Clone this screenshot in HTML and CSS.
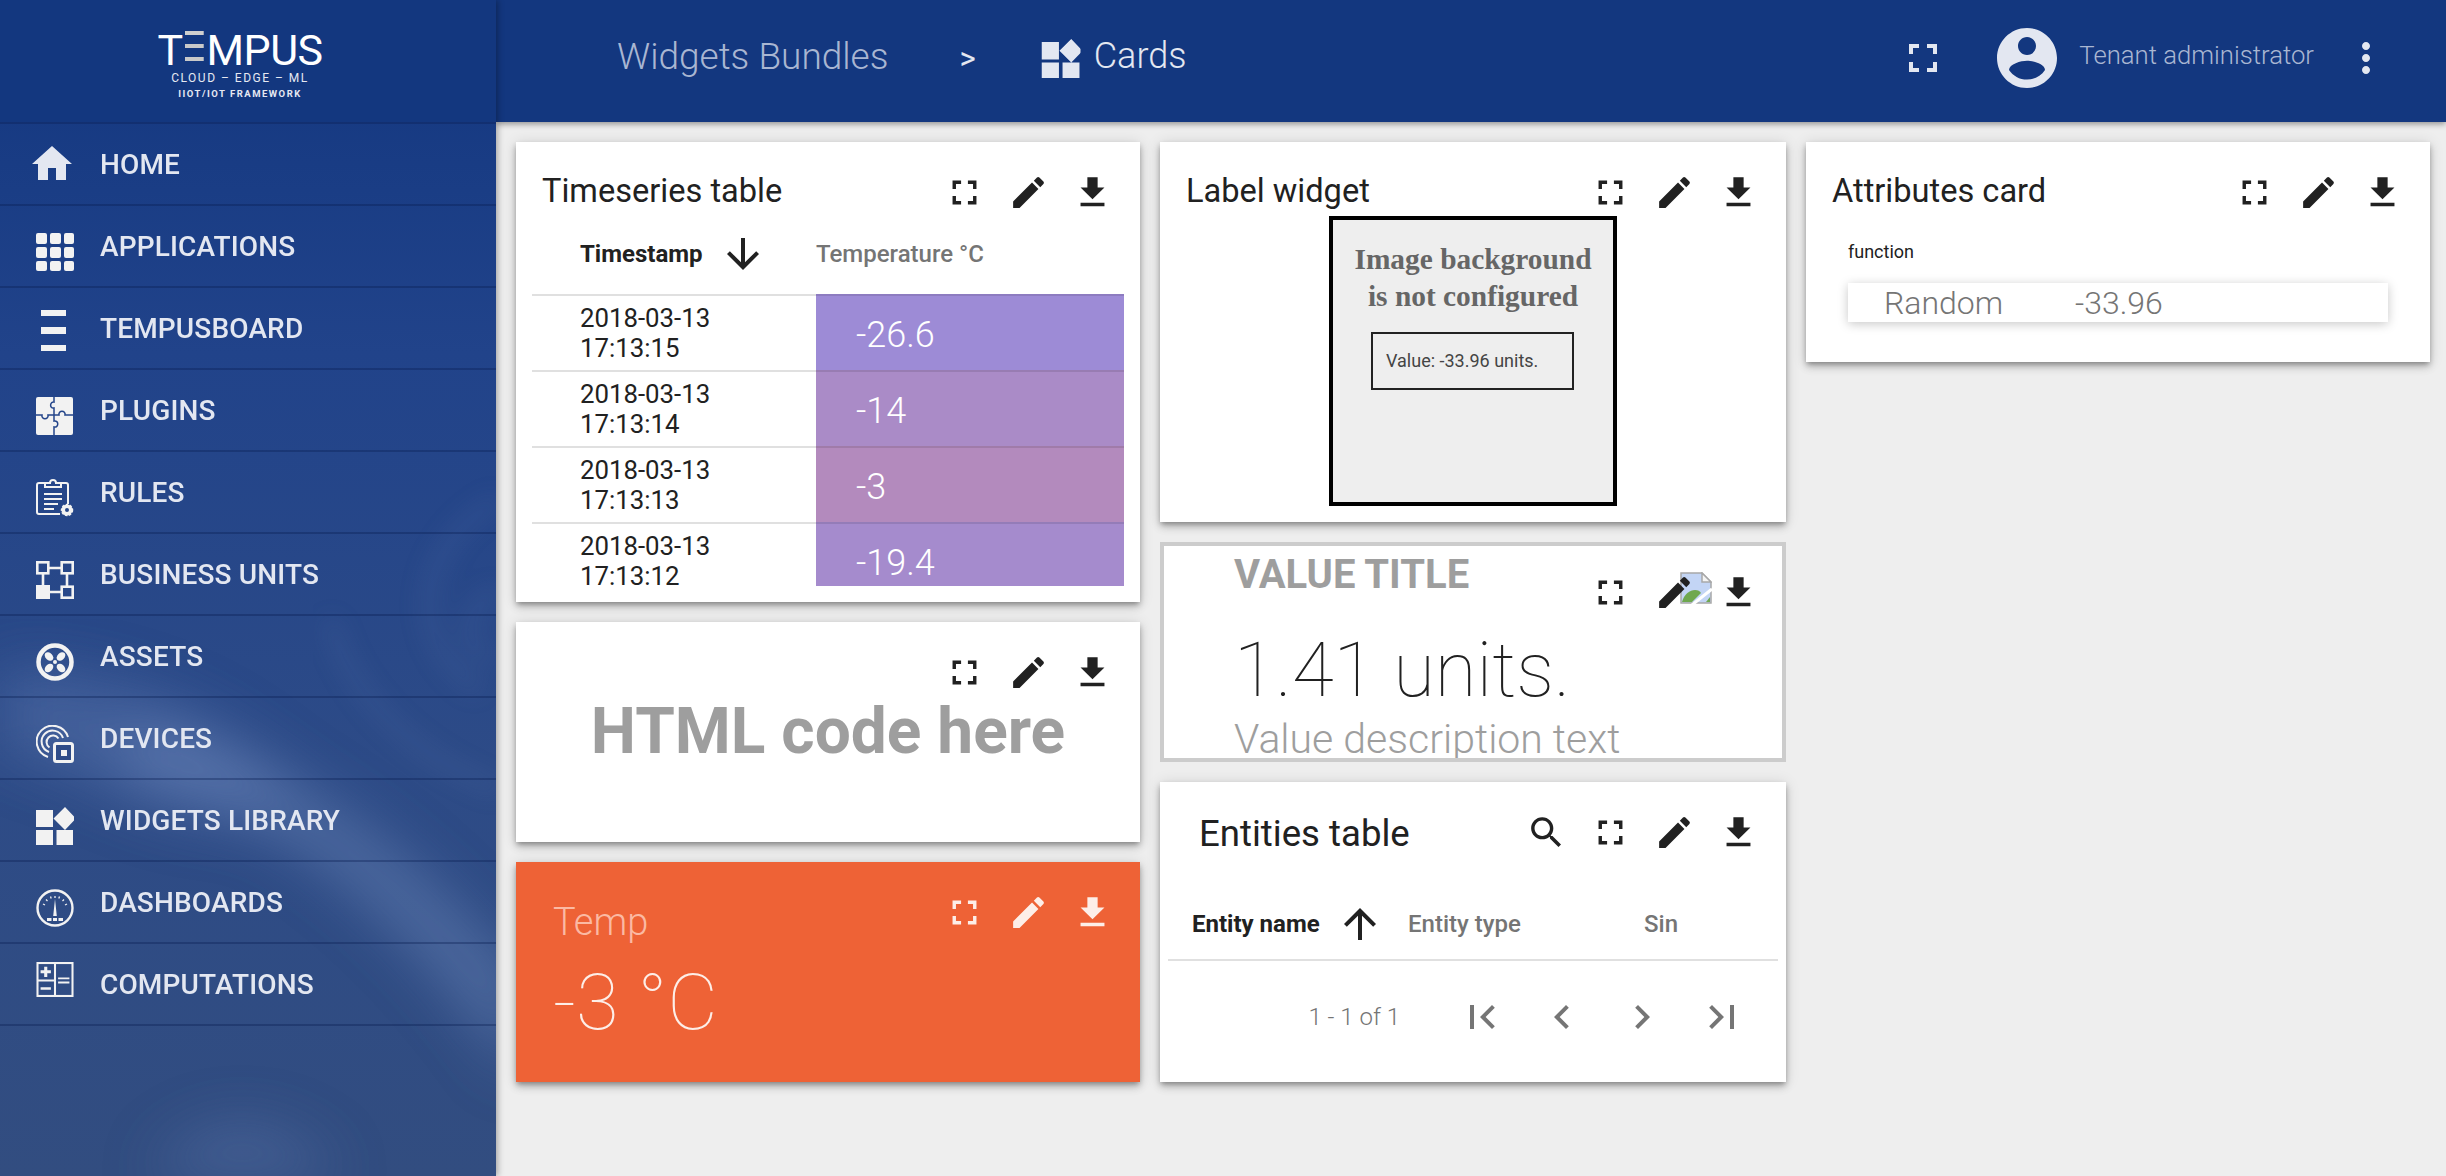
FILE: index.html
```html
<!DOCTYPE html>
<html lang="en">
<head>
    <meta charset="UTF-8">
    <title>Tempus - Cards</title>
    <link rel="stylesheet" href="styles.css">
</head>
<body>
<svg class="sprite" xmlns="http://www.w3.org/2000/svg">
    <symbol id="i_full" viewBox="0 0 24 24"><path d="M7 14H5v5h5v-2H7v-3zm-2-4h2V7h3V5H5v5zm12 7h-3v2h5v-5h-2v3zM14 5v2h3v3h2V5h-5z"/></symbol>
    <symbol id="i_edit" viewBox="0 0 24 24"><path d="M3 17.25V21h3.75L17.81 9.94l-3.75-3.75L3 17.25zM20.71 7.04c.39-.39.39-1.02 0-1.41l-2.34-2.34c-.39-.39-1.02-.39-1.41 0l-1.83 1.83 3.75 3.75 1.83-1.83z"/></symbol>
    <symbol id="i_down" viewBox="0 0 24 24"><path d="M19 9h-4V3H9v6H5l7 7 7-7zM5 18v2h14v-2H5z"/></symbol>
    <symbol id="i_search" viewBox="0 0 24 24"><path d="M15.5 14h-.79l-.28-.27C15.41 12.59 16 11.11 16 9.5 16 5.91 13.09 3 9.5 3S3 5.91 3 9.5 5.91 16 9.5 16c1.61 0 3.09-.59 4.23-1.57l.27.28v.79l5 4.99L20.49 19l-4.99-5zm-6 0C7.01 14 5 11.99 5 9.5S7.01 5 9.5 5 14 7.01 14 9.5 11.99 14 9.5 14z"/></symbol>
    <symbol id="i_widgets" viewBox="0 0 38 38"><path d="M0 3h17v17H0zM0 23h17v15H0v-15zM20.500 23H37v15H20.500zM29 0l11 11.500L29 23 17.500 11.500z"/></symbol>
</svg>

<aside class="side">
    <svg class="side_bg" viewBox="0 0 496 1176" preserveAspectRatio="none" xmlns="http://www.w3.org/2000/svg">
        <defs>
            <linearGradient id="side_base" x1="0" y1="0" x2="0" y2="1">
                <stop offset="0" stop-color="#12367f"/>
                <stop offset=".3" stop-color="#21438a"/>
                <stop offset=".65" stop-color="#2d4b87"/>
                <stop offset="1" stop-color="#324d80"/>
            </linearGradient>
            <filter id="blur_big"><feGaussianBlur stdDeviation="28"/></filter>
            <filter id="blur_small"><feGaussianBlur stdDeviation="12"/></filter>
        </defs>
        <rect width="496" height="1176" fill="url(#side_base)"/>
        <g filter="url(#blur_big)">
            <path d="M0 670 C120 670 240 720 300 800 C200 860 80 760 0 750z" fill="#5a76ad" opacity=".5"/>
            <path d="M130 780 C260 800 400 900 520 1080 L520 980 C420 860 300 760 130 720z" fill="#6a85b8" opacity=".55"/>
            <path d="M150 1176 C200 1110 280 1110 340 1176z" fill="#5f79ad" opacity=".45"/>
        </g>
        <g filter="url(#blur_small)" fill="none" stroke="#5b77ad" stroke-width="12" opacity=".25">
            <path d="M500 500 C420 540 400 640 480 690"/>
            <path d="M500 590 C460 610 460 640 490 660"/>
            <path d="M330 620 C350 700 420 760 500 790"/>
        </g>
    </svg>
    <div class="logo">
        <div class="logo_name">T<span class="logo_e">E</span>MPUS</div>
        <div class="logo_sub">CLOUD – EDGE – ML</div>
        <div class="logo_tag">IIOT/IOT FRAMEWORK</div>
    </div>
    <nav class="nav">
        <a class="nav_item">
            <svg class="nav_icon nav_icon_home" viewBox="0 0 24 24"><path d="M10 20v-6h4v6h5v-8h3L12 3 2 12h3v8z" fill="#e3e7f1"/></svg>
            HOME
        </a>
        <a class="nav_item">
            <svg class="nav_icon" viewBox="0 0 38 38"><g fill="#f2f2f2"><rect width="11" height="11" rx="2"/><rect x="14" width="11" height="11" rx="2"/><rect x="28" width="10" height="11" rx="2"/><rect y="14" width="11" height="11" rx="2"/><rect x="14" y="14" width="11" height="11" rx="2"/><rect x="28" y="14" width="10" height="11" rx="2"/><rect y="28" width="11" height="10" rx="2"/><rect x="14" y="28" width="11" height="10" rx="2"/><rect x="28" y="28" width="10" height="10" rx="2"/></g></svg>
            APPLICATIONS
        </a>
        <a class="nav_item">
            <svg class="nav_icon nav_icon_board" viewBox="0 0 38 42"><g fill="#f2f2f2"><rect x="5" width="25" height="6"/><rect x="5" y="17" width="25" height="7"/><rect x="5" y="35" width="25" height="6"/></g></svg>
            TEMPUSBOARD
        </a>
        <a class="nav_item">
            <svg class="nav_icon" viewBox="0 0 38 38"><rect width="37" height="38" rx="2" fill="#f2f2f2"/><path d="M18 0v5c-4-1-5 7 0 6v7M0 18h6c-1 5 7 5 6 0h6M18 18h5c-1-5 7-5 6 0h8M18 18v6c5-1 5 7 0 6v8" fill="none" stroke="#24458a" stroke-width="1.500"/></svg>
            PLUGINS
        </a>
        <a class="nav_item">
            <svg class="nav_icon" viewBox="0 0 38 38"><g fill="none" stroke="#f2f2f2" stroke-width="2"><path d="M26 4h4a2 2 0 0 1 2 2v19M24 35H3a2 2 0 0 1-2-2V6a2 2 0 0 1 2-2h5"/><path d="M9 8V4h5a3 3 0 0 1 6 0h5v4z"/><path d="M8 15h18M8 20h18M8 25h14M8 30h10"/></g><circle cx="31" cy="31" r="5.500" fill="#f2f2f2" stroke="#f2f2f2" stroke-width="1.500" stroke-dasharray="2.500 1.500"/><circle cx="31" cy="31" r="2" fill="#27488b"/></svg>
            RULES
        </a>
        <a class="nav_item">
            <svg class="nav_icon" viewBox="0 0 38 38"><g fill="none" stroke="#f2f2f2" stroke-width="2.600"><rect x="1.300" y="1.300" width="11" height="11"/><rect x="25.700" y="1.300" width="11" height="11"/><rect x="25.700" y="25.700" width="11" height="11"/><path d="M12 7h14M7 12v14M31 12v14M14 31h12"/></g><rect y="24" width="14" height="14" fill="#f2f2f2"/></svg>
            BUSINESS UNITS
        </a>
        <a class="nav_item">
            <svg class="nav_icon" viewBox="0 0 38 38"><circle cx="19" cy="19" r="16.500" fill="none" stroke="#f2f2f2" stroke-width="4.500"/><circle cx="19" cy="19" r="2" fill="#f2f2f2"/><g fill="#f2f2f2"><ellipse cx="13" cy="13.500" rx="5" ry="3.500" transform="rotate(45 13 13.500)"/><ellipse cx="25" cy="13.500" rx="5" ry="3.500" transform="rotate(-45 25 13.500)"/><ellipse cx="25" cy="25" rx="5" ry="3.500" transform="rotate(45 25 25)"/><ellipse cx="13" cy="25" rx="5" ry="3.500" transform="rotate(-45 13 25)"/></g></svg>
            ASSETS
        </a>
        <a class="nav_item">
            <svg class="nav_icon" viewBox="0 0 38 38"><g fill="none" stroke="#f2f2f2" stroke-width="2"><path d="M32 12A16 16 0 1 0 12 32"/><path d="M27 13A11 11 0 1 0 13 27"/><path d="M22.500 13.500A6.500 6.500 0 1 0 13.500 22.500"/></g><rect x="18.500" y="18.500" width="18" height="18" rx="2" fill="#2f4c88" stroke="#f2f2f2" stroke-width="3"/><rect x="25" y="25" width="6" height="6" fill="#f2f2f2"/></svg>
            DEVICES
        </a>
        <a class="nav_item">
            <svg class="nav_icon nav_icon_fill" viewBox="0 0 38 38"><use href="#i_widgets"/></svg>
            WIDGETS LIBRARY
        </a>
        <a class="nav_item">
            <svg class="nav_icon" viewBox="0 0 38 38"><circle cx="19" cy="19" r="17.500" fill="none" stroke="#f2f2f2" stroke-width="2.400"/><path d="M19 10l1.800 17h-3.600zM11 29h4.500v3H11zM17 29h4v3h-4zM22.500 29H27v3h-4.500z" fill="#f2f2f2"/><path d="M7 15l2 1M10 10.500l1.500 1.500M14.500 7.500l.7 2M19 7v2M23.500 7.500l-.7 2M28 10.500l-1.500 1.500M31 15l-2 1" stroke="#f2f2f2" stroke-width="1.300"/></svg>
            DASHBOARDS
        </a>
        <a class="nav_item">
            <svg class="nav_icon nav_icon_calc" viewBox="0 0 36 34"><g fill="none" stroke="#f2f2f2" stroke-width="2"><rect x="1" y="1" width="34" height="32"/><path d="M18 1v32M1 18h16"/></g><path d="M4 8h10v3H4zM7.500 4.500h3v10h-3zM4 24.500h10v2.500H4zM21 15h11v1.800H21zM21 19h11v1.800H21z" fill="#f2f2f2"/></svg>
            COMPUTATIONS
        </a>
    </nav>
</aside>

<div class="page">
    <header class="top">
        <span class="crumb">Widgets Bundles</span>
        <span class="crumb_sep">&gt;</span>
        <svg class="crumb_icon" viewBox="0 0 38 38"><use href="#i_widgets"/></svg>
        <span class="crumb crumb_now">Cards</span>
        <div class="top_right">
            <svg class="top_icon" viewBox="0 0 24 24"><use href="#i_full"/></svg>
            <svg class="avatar" viewBox="0 0 24 24"><path d="M12 2C6.48 2 2 6.48 2 12s4.480 10 10 10 10-4.480 10-10S17.520 2 12 2zm0 3c1.660 0 3 1.340 3 3s-1.340 3-3 3-3-1.340-3-3 1.340-3 3-3zm0 14.200c-2.500 0-4.710-1.280-6-3.220.03-1.990 4-3.080 6-3.080 1.990 0 5.970 1.090 6 3.080-1.290 1.940-3.500 3.220-6 3.220z"/></svg>
            <span class="user">Tenant administrator</span>
            <svg class="top_icon" viewBox="0 0 24 24"><path d="M12 8c1.100 0 2-.9 2-2s-.9-2-2-2-2 .9-2 2 .9 2 2 2zm0 2c-1.100 0-2 .9-2 2s.9 2 2 2 2-.9 2-2-.9-2-2-2zm0 6c-1.100 0-2 .9-2 2s.9 2 2 2 2-.9 2-2-.9-2-2-2z"/></svg>
        </div>
    </header>

    <main class="board">
        <div class="col">
            <section class="card card_ts">
                <div class="actions">
                    <svg viewBox="0 0 24 24"><use href="#i_full"/></svg>
                    <svg viewBox="0 0 24 24"><use href="#i_edit"/></svg>
                    <svg viewBox="0 0 24 24"><use href="#i_down"/></svg>
                </div>
                <h2 class="card_title">Timeseries table</h2>
                <div class="ts_head">
                    <div class="th th_sort">Timestamp
                        <svg class="sort_arrow" viewBox="0 0 24 24"><path d="M20 12l-1.410-1.410L13 16.170V4h-2v12.170l-5.580-5.590L4 12l8 8 8-8z"/></svg>
                    </div>
                    <div class="th">Temperature °C</div>
                </div>
                <div class="ts_body">
                    <div class="ts_row"><div class="ts_time">2018-03-13<br>17:13:15</div><div class="ts_val ts_val_a">-26.6</div></div>
                    <div class="ts_row"><div class="ts_time">2018-03-13<br>17:13:14</div><div class="ts_val ts_val_b">-14</div></div>
                    <div class="ts_row"><div class="ts_time">2018-03-13<br>17:13:13</div><div class="ts_val ts_val_c">-3</div></div>
                    <div class="ts_row"><div class="ts_time">2018-03-13<br>17:13:12</div><div class="ts_val ts_val_d">-19.4</div></div>
                </div>
            </section>
            <section class="card card_html">
                <div class="actions">
                    <svg viewBox="0 0 24 24"><use href="#i_full"/></svg>
                    <svg viewBox="0 0 24 24"><use href="#i_edit"/></svg>
                    <svg viewBox="0 0 24 24"><use href="#i_down"/></svg>
                </div>
                <div class="html_text">HTML code here</div>
            </section>
            <section class="card card_temp">
                <div class="actions">
                    <svg viewBox="0 0 24 24"><use href="#i_full"/></svg>
                    <svg viewBox="0 0 24 24"><use href="#i_edit"/></svg>
                    <svg viewBox="0 0 24 24"><use href="#i_down"/></svg>
                </div>
                <div class="temp_name">Temp</div>
                <div class="temp_val">-3 °C</div>
            </section>
        </div>

        <div class="col">
            <section class="card card_label">
                <div class="actions">
                    <svg viewBox="0 0 24 24"><use href="#i_full"/></svg>
                    <svg viewBox="0 0 24 24"><use href="#i_edit"/></svg>
                    <svg viewBox="0 0 24 24"><use href="#i_down"/></svg>
                </div>
                <h2 class="card_title">Label widget</h2>
                <div class="label_box">
                    <div class="label_msg">Image background<br>is not configured</div>
                    <div class="label_val">Value: -33.96 units.</div>
                </div>
            </section>
            <section class="card card_value">
                <svg class="broken" viewBox="0 0 32 32">
                    <path d="M1 1h21l9 9v21H1z" fill="#c3d5f5" stroke="#a8a8a8" stroke-width="1.500"/>
                    <path d="M22 1v9h9z" fill="#f4f4f4" stroke="#a8a8a8" stroke-width="1.500"/>
                    <path d="M2 30c2-8 8-12 13-12 3 0 5 1 6 3l-9 9z" fill="#6fa84f"/>
                    <path d="M26 30l4-5v5z" fill="#6fa84f"/>
                    <path d="M12 33L32 17" stroke="#fff" stroke-width="3"/>
                </svg>
                <div class="actions">
                    <svg viewBox="0 0 24 24"><use href="#i_full"/></svg>
                    <svg viewBox="0 0 24 24"><use href="#i_edit"/></svg>
                    <svg viewBox="0 0 24 24"><use href="#i_down"/></svg>
                </div>
                <div class="value_title">VALUE TITLE</div>
                <div class="value_num">1.41 units.</div>
                <div class="value_desc">Value description text</div>
            </section>
            <section class="card card_ent">
                <div class="actions">
                    <svg viewBox="0 0 24 24"><use href="#i_search"/></svg>
                    <svg viewBox="0 0 24 24"><use href="#i_full"/></svg>
                    <svg viewBox="0 0 24 24"><use href="#i_edit"/></svg>
                    <svg viewBox="0 0 24 24"><use href="#i_down"/></svg>
                </div>
                <h2 class="card_title">Entities table</h2>
                <div class="ent_head">
                    <div class="th th_sort">Entity name
                        <svg class="sort_arrow" viewBox="0 0 24 24"><path d="M4 12l1.410 1.410L11 7.830V20h2V7.830l5.580 5.590L20 12l-8-8-8 8z"/></svg>
                    </div>
                    <div class="th">Entity type</div>
                    <div class="th">Sin</div>
                </div>
                <div class="pager">
                    <span class="pager_text">1 - 1 of 1</span>
                    <svg viewBox="0 0 24 24"><path d="M18.410 16.590L13.820 12l4.590-4.590L17 6l-6 6 6 6zM6 6h2v12H6z"/></svg>
                    <svg viewBox="0 0 24 24"><path d="M15.410 7.410L14 6l-6 6 6 6 1.410-1.410L10.830 12z"/></svg>
                    <svg viewBox="0 0 24 24"><path d="M10 6L8.590 7.410 13.170 12l-4.580 4.590L10 18l6-6z"/></svg>
                    <svg viewBox="0 0 24 24"><path d="M5.590 7.410L10.180 12l-4.590 4.590L7 18l6-6-6-6zM16 6h2v12h-2z"/></svg>
                </div>
            </section>
        </div>

        <div class="col">
            <section class="card card_attr">
                <div class="actions">
                    <svg viewBox="0 0 24 24"><use href="#i_full"/></svg>
                    <svg viewBox="0 0 24 24"><use href="#i_edit"/></svg>
                    <svg viewBox="0 0 24 24"><use href="#i_down"/></svg>
                </div>
                <h2 class="card_title">Attributes card</h2>
                <div class="attr_group">function</div>
                <div class="attr_row"><span class="attr_key">Random</span><span>-33.96</span></div>
            </section>
        </div>
    </main>
</div>
</body>
</html>
```

FILE: styles.css
```css
* {
    box-sizing: border-box;
    margin: 0;
    padding: 0;
}
html, body {
    height: 100%;
}
body {
    display: flex;
    overflow: hidden;
    background: #eeeeee;
    color: #212121;
    font-family: Roboto, "Liberation Sans", sans-serif;
}
.sprite {
    display: none;
}

/* sidebar */
.side {
    position: relative;
    z-index: 3;
    flex: 0 0 496px;
    height: 1176px;
    overflow: hidden;
    box-shadow: 2px 0 6px rgba(0, 0, 0, .3);
}
.side_bg {
    position: absolute;
    top: 0;
    left: 0;
    width: 100%;
    height: 100%;
}
.logo {
    position: relative;
    height: 122px;
    padding: 29px 16px 0 0;
    background: #13377f;
    color: #ffffff;
    text-align: center;
}
.logo_name {
    font-size: 43px;
    line-height: 42px;
    letter-spacing: -.5px;
}
.logo_e {
    color: transparent;
    background: linear-gradient(#cfcfcf 0 4px, transparent 4px 13px, #c9c9c9 13px 17px, transparent 17px 26px, #c9c9c9 26px 30px, transparent 30px);
    background-size: 78% 30px;
    background-position: 50% 6px;
    background-repeat: no-repeat;
}
.logo_sub {
    font-size: 12px;
    line-height: 14px;
    letter-spacing: 1.500px;
    color: #e6e9f2;
}
.logo_tag {
    margin-top: 3px;
    font-size: 9.500px;
    font-weight: 700;
    line-height: 12px;
    letter-spacing: 1.500px;
    color: #e6e9f2;
}
.nav {
    position: relative;
}
.nav_item {
    display: flex;
    align-items: center;
    height: 82px;
    padding-left: 36px;
    border-top: 2px solid rgba(10, 30, 80, .35);
    color: #e3e7f1;
    font-size: 28px;
    font-weight: 500;
    letter-spacing: .15px;
}
.nav_item:last-child {
    height: 84px;
    border-bottom: 2px solid rgba(10, 30, 80, .35);
}
.nav_icon {
    flex: 0 0 38px;
    width: 38px;
    height: 38px;
    margin: 12px 26px 0 0;
}
.nav_icon_home {
    flex-basis: 48px;
    width: 48px;
    height: 48px;
    margin: 0 24px 0 -8px;
}
.nav_icon_board {
    height: 42px;
    margin-top: 6px;
}
.nav_icon_fill {
    fill: #f2f2f2;
}
.nav_icon_calc {
    height: 35px;
    margin-top: -10px;
}

/* top bar */
.page {
    flex: 1;
    display: flex;
    flex-direction: column;
    min-width: 0;
}
.top {
    position: relative;
    z-index: 2;
    display: flex;
    flex: 0 0 122px;
    align-items: center;
    padding: 0 56px 6px 121px;
    background: #13377f;
    box-shadow: 0 2px 6px rgba(0, 0, 0, .4);
    color: #e3e7f1;
}
.crumb {
    margin-bottom: 4px;
    font-size: 37px;
    font-weight: 300;
    color: #a9b6d2;
}
.crumb_now {
    font-size: 36px;
    color: #e3e7f1;
}
.crumb_sep {
    margin: 0 65px 0 71px;
    font-size: 31px;
}
.crumb_icon {
    width: 40px;
    height: 39px;
    margin-right: 13px;
    fill: #e3e7f1;
}
.top_right {
    display: flex;
    align-items: center;
    margin-left: auto;
    fill: #e3e7f1;
}
.top_icon {
    width: 48px;
    height: 48px;
}
.avatar {
    width: 72px;
    height: 72px;
    margin-left: 44px;
}
.user {
    margin: 0 28px 6px 16px;
    font-size: 25.700px;
    font-weight: 300;
    color: #a9b6d2;
}

/* widgets */
.board {
    display: grid;
    grid-template-columns: 624px 626px 624px;
    gap: 20px;
    padding: 20px 16px 0 20px;
}
.col {
    display: flex;
    flex-direction: column;
    gap: 20px;
    min-width: 0;
}
.card {
    position: relative;
    overflow: hidden;
    background: #ffffff;
    box-shadow: 0 3px 5px -1px rgba(0, 0, 0, .3), 0 5px 8px rgba(0, 0, 0, .16), 0 1px 14px rgba(0, 0, 0, .12);
}
.actions {
    position: absolute;
    top: 30px;
    right: 16px;
    display: flex;
    fill: #212121;
}
.actions svg {
    width: 41px;
    height: 41px;
    margin: 0 11.500px;
}
.card_title {
    padding: 29px 0 0 26px;
    font-size: 32.600px;
    font-weight: 400;
    line-height: 40px;
}
.th {
    color: #757575;
    font-size: 24px;
    font-weight: 500;
}
.th_sort {
    display: flex;
    align-items: center;
    color: #212121;
    font-weight: 700;
}
.sort_arrow {
    width: 48px;
    height: 48px;
    margin-left: 16px;
    fill: #212121;
}

/* timeseries */
.card_ts {
    height: 460px;
}
.ts_head {
    display: grid;
    grid-template-columns: 236px 1fr;
    align-items: center;
    height: 83px;
    margin: 0 16px;
    padding: 3px 0 0 48px;
}
.ts_body {
    height: 292px;
    margin: 0 16px;
}
.ts_row {
    display: grid;
    grid-template-columns: 284px 1fr;
    height: 76px;
    border-top: 2px solid #e0e0e0;
}
.ts_row:last-child {
    grid-template-rows: 62px;
    height: 64px;
}
.ts_time {
    padding: 7px 0 0 48px;
    font-size: 25.800px;
    line-height: 30px;
}
.ts_val {
    margin-top: -2px;
    padding: 19px 0 0 40px;
    border-top: 2px solid rgba(0, 0, 0, .1);
    color: #ffffff;
    font-size: 36px;
    font-weight: 300;
    line-height: 40px;
}
.ts_val_a { background: #9d8bd6; }
.ts_val_b { background: #aa8bc7; }
.ts_val_c { background: #b38abd; }
.ts_val_d { background: #a58bcd; }

/* html card */
.card_html {
    height: 220px;
    padding-top: 74px;
    text-align: center;
}
.html_text {
    color: #9e9e9e;
    font-size: 64px;
    font-weight: 700;
    line-height: 72px;
}

/* temperature card */
.card_temp {
    height: 220px;
    padding: 38px 0 0 37px;
    background: #ee6236;
}
.card_temp .actions {
    fill: #fdeee8;
}
.temp_name {
    color: #fbb9a3;
    font-size: 38px;
    font-weight: 300;
    line-height: 44px;
}
.temp_val {
    margin-top: 19px;
    color: #fdeee8;
    font-size: 78px;
    font-weight: 100;
    line-height: 80px;
}

/* label widget */
.card_label {
    height: 380px;
}
.label_box {
    position: relative;
    width: 288px;
    height: 290px;
    margin: 5px auto 0;
    padding-top: 21px;
    border: 4px solid #000000;
    background: #eeeeee;
    text-align: center;
}
.label_msg {
    color: #666666;
    font-family: "Liberation Serif", serif;
    font-size: 29.400px;
    font-weight: 700;
    line-height: 37px;
}
.label_val {
    position: absolute;
    top: 112px;
    left: 38px;
    width: 203px;
    height: 58px;
    padding-left: 13px;
    border: 2px solid #222222;
    color: #444444;
    font-size: 18px;
    line-height: 54px;
    text-align: left;
}

/* value card */
.card_value {
    height: 220px;
    padding: 7px 0 0 70px;
    border: 4px solid #cccccc;
    box-shadow: none;
}
.card_value .actions {
    top: 26px;
    right: 12px;
}
.broken {
    position: absolute;
    top: 26px;
    left: 516px;
    width: 32px;
    height: 32px;
}
.value_title {
    color: #9e9e9e;
    font-size: 40px;
    font-weight: 700;
    line-height: 44px;
}
.value_num {
    margin-top: 35px;
    font-size: 76px;
    font-weight: 100;
    line-height: 76px;
}
.value_desc {
    margin-top: 11px;
    color: #9e9e9e;
    font-size: 41px;
    font-weight: 300;
    line-height: 40px;
    white-space: nowrap;
}

/* entities */
.card_ent {
    height: 300px;
}
.card_ent .card_title {
    padding: 32px 0 0 39px;
    font-size: 36.600px;
}
.ent_head {
    display: grid;
    grid-template-columns: 216px 236px 1fr;
    align-items: center;
    height: 107px;
    margin: 0 8px;
    padding: 34px 0 0 24px;
    border-bottom: 2px solid #e0e0e0;
}
.pager {
    display: flex;
    align-items: center;
    justify-content: flex-end;
    height: 112px;
    padding-right: 24px;
    fill: #757575;
    color: #757575;
}
.pager svg {
    width: 48px;
    height: 48px;
    margin: 0 16px;
}
.pager_text {
    margin-right: 42px;
    font-size: 24px;
    font-weight: 300;
}

/* attributes */
.card_attr {
    height: 220px;
}
.attr_group {
    margin: 29px 0 0 42px;
    font-size: 18px;
    line-height: 24px;
}
.attr_row {
    display: flex;
    align-items: center;
    height: 39px;
    margin: 19px 42px 0;
    padding-left: 36px;
    box-shadow: 0 2px 10px rgba(0, 0, 0, .22);
    color: #757575;
    font-size: 32px;
    font-weight: 300;
}
.attr_key {
    width: 191px;
}
```
